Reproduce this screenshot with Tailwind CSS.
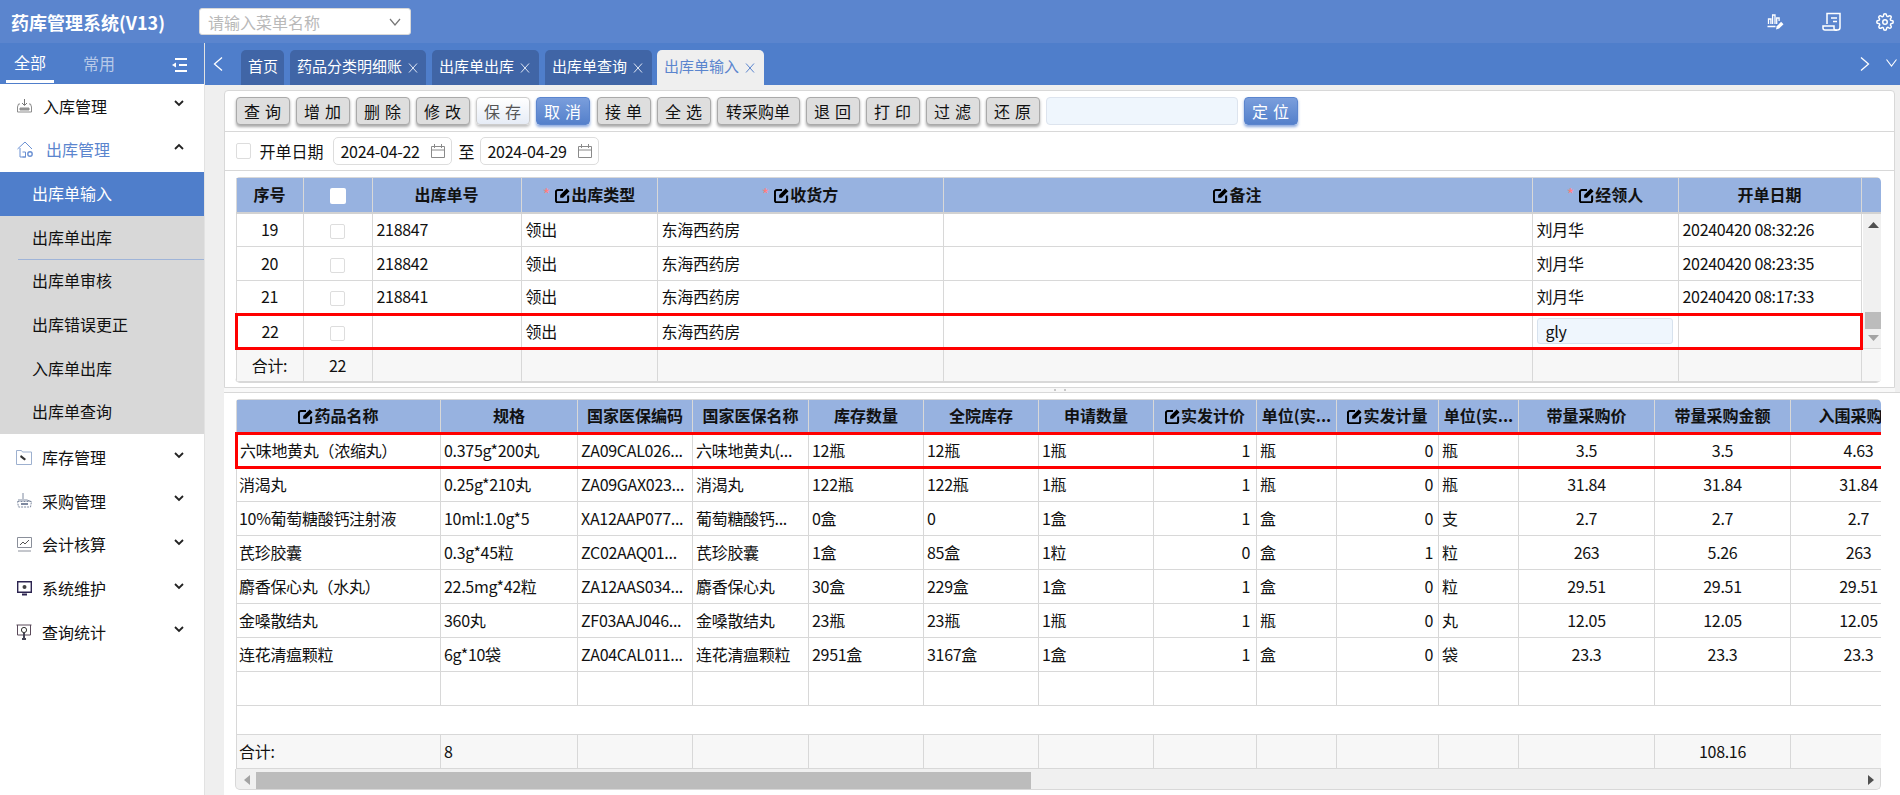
<!DOCTYPE html>
<html lang="zh-CN">
  <head>
    <meta charset="UTF-8" />
    <title>药库管理系统(V13)</title>
    <script src="https://cdn.jsdelivr.net/npm/@tailwindcss/browser@4"></script>
  </head>
  <body class="bg-[#efefef] text-[#111] text-base font-['Noto_Sans_CJK_SC','Noto_Sans',sans-serif] overflow-hidden">
    <!-- shared icons -->
    <svg class="hidden">
      <symbol id="edit" viewBox="0 0 16 16">
        <path d="M8.5 2.2H3a2 2 0 0 0-2 2v9a2 2 0 0 0 2 2h9a2 2 0 0 0 2-2V8" fill="none" stroke="#000" stroke-width="2.2"/>
        <path d="M5.5 10.5V7.5L12.5.5 15.5 3.5 8.5 10.5z" fill="#000"/>
      </symbol>
      <symbol id="down" viewBox="0 0 12 8">
        <path d="M2 2l4 4 4-4" fill="none" stroke="#222" stroke-width="1.8"/>
      </symbol>
      <symbol id="cal" viewBox="0 0 14 14">
        <path d="M.5 2.5h13v11H.5zM.5 6h13M3.5 0v4M10.5 0v4" fill="none" stroke="#8a8a8a"/>
      </symbol>
      <symbol id="x" viewBox="0 0 10 10">
        <path d="M1 .5l8 9M9 .5l-8 9" fill="none" stroke="currentColor" stroke-width="1"/>
      </symbol>
    </svg>

    <div class="flex flex-col h-[795px] w-[1900px]">
      <!-- Header -->
      <header class="h-[43px] shrink-0 bg-[#5b85ce] flex items-center text-white">
        <h1 class="ml-[11px] w-[188px] text-[18px] leading-[24px] font-bold">药库管理系统(V13)</h1>
        <div class="w-[212px] h-[27px] bg-white rounded-[3px] border border-[#d8d8d8] flex items-center justify-between pl-[8px] pr-[9px] text-[#b9b9b9]">
          <span>请输入菜单名称</span>
          <svg class="w-[12px] h-[8px]" viewBox="0 0 12 8"><path d="M1 1l5 6 5-6" fill="none" stroke="#777" stroke-width="1.2"/></svg>
        </div>
        <div class="ml-auto flex items-center">
          <svg class="w-[17px] h-[16px]" viewBox="0 0 17 16" fill="none" stroke="#fff" stroke-width="1.3">
            <path d="M1.5 10V5h2.4v5M5.6 10V1h2.4v9M9.7 10V4h2.4v3M.5 12.5h8"/>
            <path d="M9 15.5l.7-3.3 4.4-4.4 2.4 2.4-4.4 4.4z" fill="#fff" stroke="none"/>
          </svg>
          <svg class="ml-[38px] w-[20px] h-[19px]" viewBox="0 0 20 19" fill="none" stroke="#fff" stroke-width="1.5">
            <path d="M5 12V1.5h13v14a2.5 2.5 0 0 1-2.5 2.5H3"/>
            <path d="M3 18a2 2 0 0 1-2-2v-2h11v2a2 2 0 0 0 3 2" />
            <path d="M9 6h6M11 9.5h4"/>
          </svg>
          <svg class="ml-[34px] mr-[6px] w-[18px] h-[18px]" viewBox="0 0 24 24" fill="none" stroke="#fff" stroke-width="2">
            <circle cx="12" cy="12" r="3"/>
            <path d="M19.4 15a1.65 1.65 0 0 0 .33 1.82l.06.06a2 2 0 1 1-2.83 2.83l-.06-.06a1.65 1.65 0 0 0-2.82 1.17V21a2 2 0 1 1-4 0v-.09a1.65 1.65 0 0 0-2.82-1.17l-.06.06a2 2 0 1 1-2.83-2.83l.06-.06A1.65 1.65 0 0 0 3.09 14H3a2 2 0 1 1 0-4h.09a1.65 1.65 0 0 0 1.17-2.82l-.06-.06a2 2 0 1 1 2.83-2.83l.06.06A1.65 1.65 0 0 0 10 3.09V3a2 2 0 1 1 4 0v.09a1.65 1.65 0 0 0 2.82 1.17l.06-.06a2 2 0 1 1 2.83 2.83l-.06.06A1.65 1.65 0 0 0 20.91 10H21a2 2 0 1 1 0 4h-.09a1.65 1.65 0 0 0-1.51 1z"/>
          </svg>
        </div>
      </header>

      <div class="flex flex-1 min-h-0">
        <!-- Sidebar -->
        <aside class="w-[205px] shrink-0 bg-white border-r border-[#e2e2e2]">
          <div class="h-[41px] bg-[#4f7ecb] flex relative text-white">
            <div class="w-[48px] ml-[6px] h-[40px] border-b-[3px] border-white flex items-center justify-center">全部</div>
            <div class="ml-[29px] leading-[40px] text-[#b7c9e8]">常用</div>
            <svg class="absolute left-[172px] top-[15px] w-[15px] h-[14px]" viewBox="0 0 15 14" fill="none" stroke="#fff" stroke-width="2">
              <path d="M3 1h12M7 7h8M3 13h12"/>
              <path d="M0 7l4-2.5v5z" fill="#fff" stroke="none"/>
            </svg>
          </div>
          <nav>
            <a class="flex items-center h-[43.67px] pb-[2px] mt-[1px] pl-[17px]">
              <svg class="w-[15px] h-[15px]" viewBox="0 0 15 15" fill="none" stroke="#8d8d8d">
                <path d="M3 6H1.5L.5 9v5h14V9l-1-3H12"/>
                <path d="M7.5 1v6M5 5l2.5 2.5L10 5" stroke="#777"/>
                <path d="M3 10h9v2H3z" fill="#9a9a9a"/>
              </svg>
              <span class="ml-[11px]">入库管理</span>
              <svg class="w-[12px] h-[8px] ml-auto mr-[19px] -mt-[5px]"><use href="#down"/></svg>
            </a>
            <a class="flex items-center h-[43.67px] pb-[2px] pl-[17px] text-[#5b85ce]">
              <svg class="w-[18px] h-[17px]" viewBox="0 0 18 17" fill="none" stroke="#6a90d2">
                <path d="M.5 8L8 1l7 7M3 7v9h6M5.5 11h3v5h-3"/>
                <circle cx="13" cy="13" r="2.2" stroke-width="1.4"/>
              </svg>
              <span class="ml-[11px]">出库管理</span>
              <svg class="w-[12px] h-[8px] ml-auto mr-[19px] -mt-[5px] rotate-180"><use href="#down"/></svg>
            </a>
            <div class="bg-[#d8d8d8]">
              <a class="flex items-center h-[43.67px] pb-[2px] pl-[32px] bg-[#4f7ecb] text-white">出库单输入</a>
              <a class="flex items-center h-[43.67px] pb-[2px] pl-[32px] relative">出库单出库<span class="absolute left-[18px] right-0 bottom-0 h-px bg-[#9fb4d8]"></span></a>
              <a class="flex items-center h-[43.67px] pb-[2px] pl-[32px]">出库单审核</a>
              <a class="flex items-center h-[43.67px] pb-[2px] pl-[32px]">出库错误更正</a>
              <a class="flex items-center h-[43.67px] pb-[2px] pl-[32px]">入库单出库</a>
              <a class="flex items-center h-[43.67px] pb-[2px] pl-[32px]">出库单查询</a>
            </div>
            <a class="flex items-center h-[43.67px] pb-[2px] mt-[2px] pl-[16px]">
              <svg class="w-[16px] h-[15px]" viewBox="0 0 16 15" fill="none" stroke="#b9a99a">
                <path d="M.5.5h5l1 1.5h9v12.5H.5z" stroke="#9db0cf"/>
                <path d="M5 5l5 4-1.5 1.5L4 7z" fill="#333" stroke="none"/>
              </svg>
              <span class="ml-[10px]">库存管理</span>
              <svg class="w-[12px] h-[8px] ml-auto mr-[19px] -mt-[5px]"><use href="#down"/></svg>
            </a>
            <a class="flex items-center h-[43.67px] pb-[2px] pl-[17px]">
              <svg class="w-[15px] h-[15px]" viewBox="0 0 15 15" fill="none" stroke="#7f8aa0">
                <path d="M6 0v6M1 7h9l4 1.5" />
                <path d="M.5 8.5h14l-1 5.5H1.5z" stroke-dasharray="2 1"/>
                <path d="M4 11h7" stroke-width="2"/>
              </svg>
              <span class="ml-[10px]">采购管理</span>
              <svg class="w-[12px] h-[8px] ml-auto mr-[19px] -mt-[5px]"><use href="#down"/></svg>
            </a>
            <a class="flex items-center h-[43.67px] pb-[2px] pl-[17px]">
              <svg class="w-[15px] h-[15px]" viewBox="0 0 15 15" fill="none" stroke="#8a8f9a">
                <path d="M.5.5h14v10H.5zM1 14h13"/>
                <path d="M3 8l3-3 2 2 4-4" stroke="#555"/>
              </svg>
              <span class="ml-[10px]">会计核算</span>
              <svg class="w-[12px] h-[8px] ml-auto mr-[19px] -mt-[5px]"><use href="#down"/></svg>
            </a>
            <a class="flex items-center h-[43.67px] pb-[2px] pl-[17px]">
              <svg class="w-[15px] h-[15px]" viewBox="0 0 15 15" fill="none" stroke="#2c2450">
                <path d="M.7.7h13.6v10.6H.7z" stroke-width="1.4"/>
                <circle cx="7.5" cy="6" r="2" fill="#444" stroke="none"/>
                <path d="M5 13.5h5" stroke-width="2"/>
              </svg>
              <span class="ml-[10px]">系统维护</span>
              <svg class="w-[12px] h-[8px] ml-auto mr-[19px] -mt-[5px]"><use href="#down"/></svg>
            </a>
            <a class="flex items-center h-[43.67px] pb-[2px] pl-[16px]">
              <svg class="w-[16px] h-[16px]" viewBox="0 0 16 16" fill="none" stroke="#333">
                <path d="M.5 1h15M1.5 1v10h13V1" stroke="#5a4a5a"/>
                <circle cx="8" cy="6" r="2.6"/>
                <path d="M8 9v6M6 15h4" stroke-width="2" stroke="#445"/>
              </svg>
              <span class="ml-[10px]">查询统计</span>
              <svg class="w-[12px] h-[8px] ml-auto mr-[19px] -mt-[5px]"><use href="#down"/></svg>
            </a>
          </nav>
        </aside>

        <main class="flex-1 min-w-0 flex flex-col">
          <!-- Tabs -->
          <div class="h-[42px] shrink-0 bg-[#4f7ecb] flex items-end text-white text-[15px] pl-[8px]">
            <svg class="w-[10px] h-[14px] mb-[14px] mr-[18px]" viewBox="0 0 10 14"><path d="M9 .5L1.5 7 9 13.5" fill="none" stroke="#fff" stroke-width="1.3"/></svg>
            <div class="flex gap-[6px]">
              <div class="w-[43px] h-[35px] pb-[2px] rounded-t-[5px] bg-[#4065a6] flex items-center pl-[7px]">首页</div>
              <div class="w-[136px] h-[35px] pb-[2px] rounded-t-[5px] bg-[#4065a6] flex items-center pl-[7px]"><span>药品分类明细账</span><svg class="w-[10px] h-[10px] mt-[2px] ml-[6px] text-[#dfe7f5]"><use href="#x"/></svg></div>
              <div class="w-[107px] h-[35px] pb-[2px] rounded-t-[5px] bg-[#4065a6] flex items-center pl-[7px]"><span>出库单出库</span><svg class="w-[10px] h-[10px] mt-[2px] ml-[6px] text-[#dfe7f5]"><use href="#x"/></svg></div>
              <div class="w-[107px] h-[35px] pb-[2px] rounded-t-[5px] bg-[#4065a6] flex items-center pl-[7px]"><span>出库单查询</span><svg class="w-[10px] h-[10px] mt-[2px] ml-[6px] text-[#dfe7f5]"><use href="#x"/></svg></div>
              <div class="w-[107px] h-[35px] pb-[2px] rounded-t-[5px] bg-[#efefef] text-[#5b85ce] flex items-center pl-[7px] -ml-[1px]"><span>出库单输入</span><svg class="w-[10px] h-[10px] mt-[2px] ml-[6px]"><use href="#x"/></svg></div>
            </div>
            <svg class="ml-auto w-[10px] h-[14px] mb-[14px]" viewBox="0 0 10 14"><path d="M1 .5L8.5 7 1 13.5" fill="none" stroke="#fff" stroke-width="1.3"/></svg>
            <svg class="ml-[16px] mr-[3px] w-[11px] h-[8px] mb-[18px]" viewBox="0 0 11 8"><path d="M.5.5l5 6.5 5-6.5" fill="none" stroke="#fff" stroke-width="1.1"/></svg>
          </div>

          <!-- Upper panel -->
          <section class="mt-[5px] ml-[19px] mr-[5px] h-[298px] shrink-0 bg-white border border-[#d8d8d8] rounded-t-[4px]">
            <div class="h-[41px] border-b border-[#d8d8d8] pl-[10.5px] flex items-center gap-[6px]">
              <button class="w-[54px] h-[28px] pl-[5px] tracking-[5px] rounded-[4px] border border-[#aaa] bg-[#dedede] shadow-[0_2px_3px_rgba(0,0,0,0.35)]">查询</button>
              <button class="w-[54px] h-[28px] pl-[5px] tracking-[5px] rounded-[4px] border border-[#aaa] bg-[#dedede] shadow-[0_2px_3px_rgba(0,0,0,0.35)]">增加</button>
              <button class="w-[54px] h-[28px] pl-[5px] tracking-[5px] rounded-[4px] border border-[#aaa] bg-[#dedede] shadow-[0_2px_3px_rgba(0,0,0,0.35)]">删除</button>
              <button class="w-[54px] h-[28px] pl-[5px] tracking-[5px] rounded-[4px] border border-[#aaa] bg-[#dedede] shadow-[0_2px_3px_rgba(0,0,0,0.35)]">修改</button>
              <button class="w-[54px] h-[28px] pl-[5px] tracking-[5px] rounded-[4px] border border-[#ccc] text-[#555] bg-linear-to-b from-white to-[#e6ecf6] shadow-[0_2px_3px_rgba(0,0,0,0.25)]">保存</button>
              <button class="w-[54px] h-[28px] pl-[5px] tracking-[5px] rounded-[4px] border border-[#5b85ce] text-white bg-linear-to-b from-[#7a9edc] to-[#5480cb] shadow-[0_2px_3px_rgba(60,110,200,0.6)]">取消</button>
              <button class="w-[54px] h-[28px] ml-[1px] pl-[5px] tracking-[5px] rounded-[4px] border border-[#aaa] bg-[#dedede] shadow-[0_2px_3px_rgba(0,0,0,0.35)]">接单</button>
              <button class="w-[54px] h-[28px] pl-[5px] tracking-[5px] rounded-[4px] border border-[#aaa] bg-[#dedede] shadow-[0_2px_3px_rgba(0,0,0,0.35)]">全选</button>
              <button class="w-[83px] h-[28px] rounded-[4px] border border-[#aaa] bg-[#dedede] shadow-[0_2px_3px_rgba(0,0,0,0.35)]">转采购单</button>
              <button class="w-[54px] h-[28px] pl-[5px] tracking-[5px] rounded-[4px] border border-[#aaa] bg-[#dedede] shadow-[0_2px_3px_rgba(0,0,0,0.35)]">退回</button>
              <button class="w-[54px] h-[28px] pl-[5px] tracking-[5px] rounded-[4px] border border-[#aaa] bg-[#dedede] shadow-[0_2px_3px_rgba(0,0,0,0.35)]">打印</button>
              <button class="w-[54px] h-[28px] pl-[5px] tracking-[5px] rounded-[4px] border border-[#aaa] bg-[#dedede] shadow-[0_2px_3px_rgba(0,0,0,0.35)]">过滤</button>
              <button class="w-[54px] h-[28px] pl-[5px] tracking-[5px] rounded-[4px] border border-[#aaa] bg-[#dedede] shadow-[0_2px_3px_rgba(0,0,0,0.35)]">还原</button>
              <div class="w-[192px] h-[28px] rounded-[4px] border border-[#dde4ee] bg-[#eff6fd]"></div>
              <button class="w-[54px] h-[28px] pl-[5px] tracking-[5px] rounded-[4px] border border-[#5b85ce] text-white bg-linear-to-b from-[#7a9edc] to-[#5480cb] shadow-[0_2px_3px_rgba(60,110,200,0.6)]">定位</button>
            </div>
            <div class="h-[39px] border-b border-[#d8d8d8] pl-[10.5px] flex items-center">
              <span class="w-[15px] h-[16px] border border-[#ddd] rounded-[2px]"></span>
              <span class="ml-[9px]">开单日期</span>
              <div class="ml-[9px] w-[119px] h-[28px] border border-[#ddd] rounded-[5px] flex items-center pl-[7px] tracking-[-0.3px]">2024-04-22<svg class="ml-auto mr-[6px] w-[14px] h-[14px]"><use href="#cal"/></svg></div>
              <span class="ml-[7px] mr-[5px]">至</span>
              <div class="w-[119px] h-[28px] border border-[#ddd] rounded-[5px] flex items-center pl-[7px] tracking-[-0.3px]">2024-04-29<svg class="ml-auto mr-[6px] w-[14px] h-[14px]"><use href="#cal"/></svg></div>
            </div>
            <div class="mt-[6px] ml-[9.5px] w-[1646px] rounded-[5px] overflow-hidden border-b border-[#d8d8d8]">
              <table class="w-[1646px] table-fixed [&_td]:border [&_td]:border-[#d8d8d8] [&_td]:px-[4px] [&_td]:pb-[2px] [&_td]:whitespace-nowrap [&_td]:overflow-hidden [&_td]:tracking-[-0.3px] [&_th]:border [&_th]:border-[#d8d8d8] [&_th]:pb-[2px] [&_th]:font-bold [&_th]:bg-[#97b2e0] [&_th]:border-b-2 [&_th]:border-b-[#d2d2d2]">
                <colgroup>
                  <col class="w-[67px]"/><col class="w-[69px]"/><col class="w-[149px]"/><col class="w-[136px]"/><col class="w-[286px]"/><col class="w-[589px]"/><col class="w-[146px]"/><col class="w-[183px]"/><col class="w-[21px]"/>
                </colgroup>
                <thead>
                  <tr class="h-[35px]">
                    <th>序号</th>
                    <th><span class="inline-block align-middle w-[16px] h-[16px] bg-white rounded-[2px]"></span></th>
                    <th>出库单号</th>
                    <th><span class="text-[#ff7f7f] font-normal mr-[5px]">*</span><svg class="inline-block align-[-2px] w-[15px] h-[15px] mr-[1px]"><use href="#edit"/></svg>出库类型</th>
                    <th><span class="text-[#ff7f7f] font-normal mr-[5px]">*</span><svg class="inline-block align-[-2px] w-[15px] h-[15px] mr-[1px]"><use href="#edit"/></svg>收货方</th>
                    <th><svg class="inline-block align-[-2px] w-[15px] h-[15px] mr-[1px]"><use href="#edit"/></svg>备注</th>
                    <th><span class="text-[#ff7f7f] font-normal mr-[5px]">*</span><svg class="inline-block align-[-2px] w-[15px] h-[15px] mr-[1px]"><use href="#edit"/></svg>经领人</th>
                    <th>开单日期</th>
                    <th></th>
                  </tr>
                </thead>
                <tbody>
                  <tr class="h-[34px]">
                    <td class="text-center">19</td>
                    <td class="text-center"><span class="inline-block align-middle w-[15px] h-[15px] border border-[#ddd] rounded-[2px]"></span></td>
                    <td>218847</td><td>领出</td><td>东海西药房</td><td></td><td>刘月华</td><td>20240420 08:32:26</td>
                    <td rowspan="4" class="bg-[#f0f0f0] p-0! align-top relative">
                      <svg class="absolute left-[5px] top-[8px] w-[11px] h-[6px]" viewBox="0 0 11 6"><path d="M5.5 0L11 6H0z" fill="#505050"/></svg>
                      <span class="absolute left-[2px] right-[1px] top-[98px] h-[17px] bg-[#bcbcbc]"></span>
                      <svg class="absolute left-[5px] top-[121px] w-[11px] h-[6px]" viewBox="0 0 11 6"><path d="M0 0h11L5.5 6z" fill="#a3a3a3"/></svg>
                    </td>
                  </tr>
                  <tr class="h-[34px]">
                    <td class="text-center">20</td>
                    <td class="text-center"><span class="inline-block align-middle w-[15px] h-[15px] border border-[#ddd] rounded-[2px]"></span></td>
                    <td>218842</td><td>领出</td><td>东海西药房</td><td></td><td>刘月华</td><td>20240420 08:23:35</td>
                  </tr>
                  <tr class="h-[34px]">
                    <td class="text-center">21</td>
                    <td class="text-center"><span class="inline-block align-middle w-[15px] h-[15px] border border-[#ddd] rounded-[2px]"></span></td>
                    <td>218841</td><td>领出</td><td>东海西药房</td><td></td><td>刘月华</td><td>20240420 08:17:33</td>
                  </tr>
                  <tr class="h-[34px] [&>td]:border-y-3 [&>td]:border-y-[#f00]! [&>td:first-child]:border-l-3 [&>td:first-child]:border-l-[#f00]! [&>td:last-child]:border-r-3 [&>td:last-child]:border-r-[#f00]!">
                    <td class="text-center">22</td>
                    <td class="text-center"><span class="inline-block align-middle w-[15px] h-[15px] border border-[#ddd] rounded-[2px]"></span></td>
                    <td></td><td>领出</td><td>东海西药房</td><td></td>
                    <td><div class="h-[26px] w-[136px] rounded-[3px] border border-[#d7e2ee] bg-[#eff6fd] pl-[8px] leading-[24px]">gly</div></td>
                    <td></td>
                  </tr>
                  <tr class="h-[33px] bg-[#f7f7f7]">
                    <td class="text-center">合计:</td><td class="text-center">22</td><td></td><td></td><td></td><td></td><td></td><td></td><td></td>
                  </tr>
                </tbody>
              </table>
            </div>
          </section>

          <!-- Splitter -->
          <div class="ml-[19px] mr-[5px] h-[4px] shrink-0 bg-[#f8f8f8] flex items-center justify-center gap-[1px]">
            <span class="w-[12px] h-[3px] border-x-2 border-[#c8c8c8] border-dotted"></span>
          </div>

          <!-- Lower panel -->
          <section class="ml-[19px] flex-1 min-h-0 bg-white border-t border-[#d8d8d8] pt-[6px] pl-[11px]">
            <div class="w-[1646px] rounded-t-[5px] overflow-hidden">
              <table class="w-[1690px] table-fixed [&_td]:border [&_td]:border-[#d8d8d8] [&_td]:px-[3px] [&_td]:pb-[2px] [&_td]:whitespace-nowrap [&_td]:overflow-hidden [&_td]:tracking-[-0.3px] [&_th]:border [&_th]:border-[#d8d8d8] [&_th]:pb-[2px] [&_th]:font-bold [&_th]:bg-[#97b2e0] [&_th]:whitespace-nowrap [&_th]:overflow-hidden">
                <colgroup>
                  <col class="w-[204px]"/><col class="w-[137px]"/><col class="w-[115px]"/><col class="w-[116px]"/><col class="w-[115px]"/><col class="w-[115px]"/><col class="w-[115px]"/><col class="w-[103px]"/><col class="w-[80px]"/><col class="w-[102px]"/><col class="w-[80px]"/><col class="w-[136px]"/><col class="w-[136px]"/><col class="w-[136px]"/>
                </colgroup>
                <thead>
                  <tr class="h-[34px]">
                    <th><svg class="inline-block align-[-2px] w-[15px] h-[15px] mr-[1px]"><use href="#edit"/></svg>药品名称</th>
                    <th>规格</th><th>国家医保编码</th><th>国家医保名称</th><th>库存数量</th><th>全院库存</th><th>申请数量</th>
                    <th><svg class="inline-block align-[-2px] w-[15px] h-[15px] mr-[1px]"><use href="#edit"/></svg>实发计价</th>
                    <th>单位(实...</th>
                    <th><svg class="inline-block align-[-2px] w-[15px] h-[15px] mr-[1px]"><use href="#edit"/></svg>实发计量</th>
                    <th>单位(实...</th>
                    <th>带量采购价</th><th>带量采购金额</th><th>入围采购价</th>
                  </tr>
                </thead>
                <tbody class="[&_td:first-child]:pl-[2px]! [&_td:nth-child(8)]:text-right [&_td:nth-child(10)]:text-right [&_td:nth-child(n+12)]:text-center [&_td:nth-child(8)]:pr-[6px]! [&_td:nth-child(10)]:pr-[5px]!">
                  <tr class="h-[34px] [&>td]:border-y-3 [&>td]:border-y-[#f00]!">
                    <td class="border-l-3! border-l-[#f00]!">六味地黄丸（浓缩丸）</td><td>0.375g*200丸</td><td>ZA09CAL026...</td><td>六味地黄丸(...</td><td>12瓶</td><td>12瓶</td><td>1瓶</td><td>1</td><td>瓶</td><td>0</td><td>瓶</td><td>3.5</td><td>3.5</td><td>4.63</td>
                  </tr>
                  <tr class="h-[34px]">
                    <td>消渴丸</td><td>0.25g*210丸</td><td>ZA09GAX023...</td><td>消渴丸</td><td>122瓶</td><td>122瓶</td><td>1瓶</td><td>1</td><td>瓶</td><td>0</td><td>瓶</td><td>31.84</td><td>31.84</td><td>31.84</td>
                  </tr>
                  <tr class="h-[34px]">
                    <td>10%葡萄糖酸钙注射液</td><td>10ml:1.0g*5</td><td>XA12AAP077...</td><td>葡萄糖酸钙...</td><td>0盒</td><td>0</td><td>1盒</td><td>1</td><td>盒</td><td>0</td><td>支</td><td>2.7</td><td>2.7</td><td>2.7</td>
                  </tr>
                  <tr class="h-[34px]">
                    <td>芪珍胶囊</td><td>0.3g*45粒</td><td>ZC02AAQ01...</td><td>芪珍胶囊</td><td>1盒</td><td>85盒</td><td>1粒</td><td>0</td><td>盒</td><td>1</td><td>粒</td><td>263</td><td>5.26</td><td>263</td>
                  </tr>
                  <tr class="h-[34px]">
                    <td>麝香保心丸（水丸）</td><td>22.5mg*42粒</td><td>ZA12AAS034...</td><td>麝香保心丸</td><td>30盒</td><td>229盒</td><td>1盒</td><td>1</td><td>盒</td><td>0</td><td>粒</td><td>29.51</td><td>29.51</td><td>29.51</td>
                  </tr>
                  <tr class="h-[34px]">
                    <td>金嗓散结丸</td><td>360丸</td><td>ZF03AAJ046...</td><td>金嗓散结丸</td><td>23瓶</td><td>23瓶</td><td>1瓶</td><td>1</td><td>瓶</td><td>0</td><td>丸</td><td>12.05</td><td>12.05</td><td>12.05</td>
                  </tr>
                  <tr class="h-[34px]">
                    <td>连花清瘟颗粒</td><td>6g*10袋</td><td>ZA04CAL011...</td><td>连花清瘟颗粒</td><td>2951盒</td><td>3167盒</td><td>1盒</td><td>1</td><td>盒</td><td>0</td><td>袋</td><td>23.3</td><td>23.3</td><td>23.3</td>
                  </tr>
                  <tr class="h-[34px]">
                    <td></td><td></td><td></td><td></td><td></td><td></td><td></td><td></td><td></td><td></td><td></td><td></td><td></td><td></td>
                  </tr>
                  <tr class="h-[29px]"><td colspan="14"></td></tr>
                  <tr class="h-[34px] bg-[#f7f7f7]">
                    <td>合计:</td><td>8</td><td></td><td></td><td></td><td></td><td></td><td></td><td></td><td></td><td></td><td></td><td>108.16</td><td></td>
                  </tr>
                </tbody>
              </table>
              <div class="h-[21px] bg-[#f0f0f0] border-x border-b border-[#d8d8d8] rounded-b-[5px] flex items-center relative">
                <svg class="absolute left-[8px] top-[6px] w-[6px] h-[10px]" viewBox="0 0 6 10"><path d="M6 0v10L0 5z" fill="#a3a3a3"/></svg>
                <span class="absolute left-[20px] w-[775px] top-[3px] h-[17px] bg-[#bcbcbc]"></span>
                <svg class="absolute right-[6px] top-[6px] w-[6px] h-[10px]" viewBox="0 0 6 10"><path d="M0 0v10l6-5z" fill="#505050"/></svg>
              </div>
            </div>
          </section>
        </main>
      </div>
    </div>
  </body>
</html>
